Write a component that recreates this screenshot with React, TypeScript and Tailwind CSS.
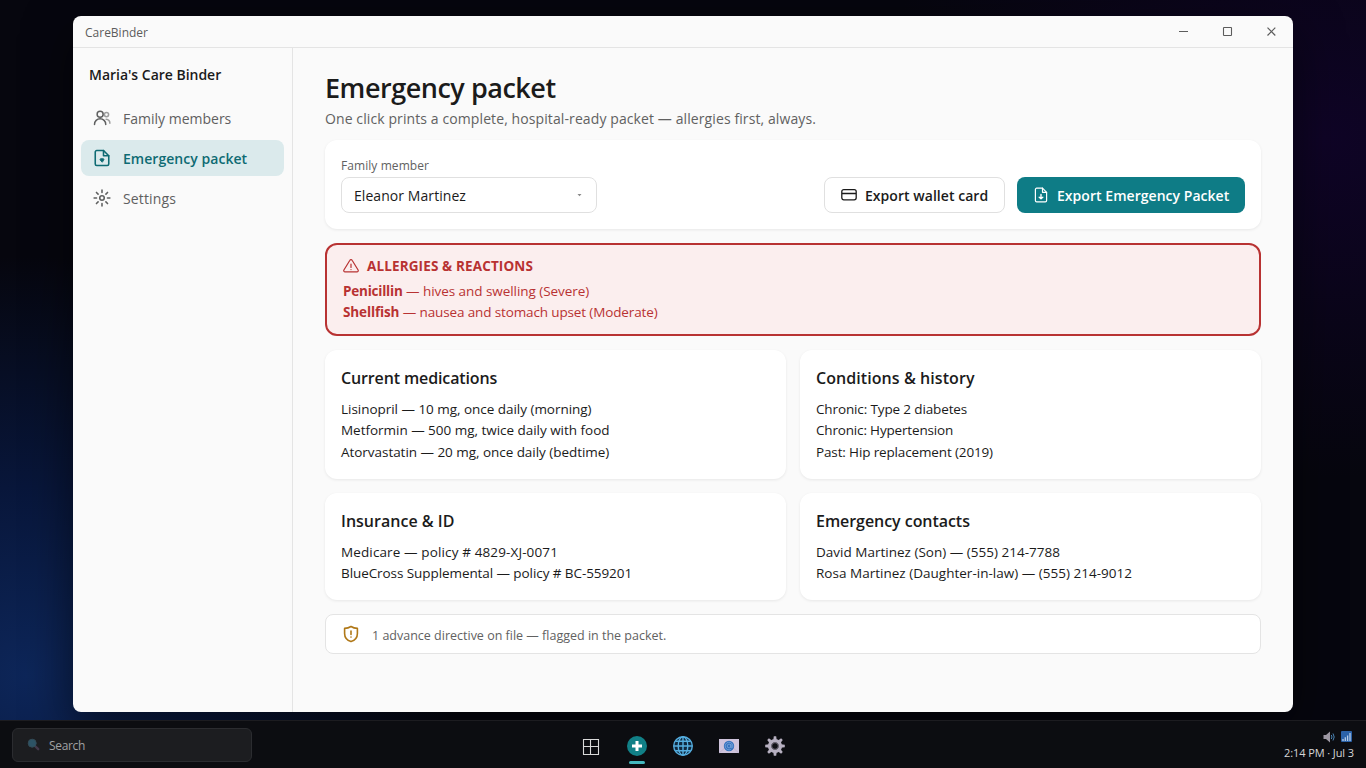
import type { ReactNode } from "react";

function UsersIcon() {
  return (
    <svg width="18" height="18" viewBox="0 0 24 24" fill="none" stroke="currentColor" strokeWidth="2" strokeLinecap="round">
      <circle cx="9.5" cy="7" r="4" />
      <path d="M2 20.500a7.500 7.500 0 0 1 15 0" />
      <g opacity=".6">
        <circle cx="18" cy="7.500" r="2.800" />
        <path d="M17.500 13.600c3 .3 5 2.400 5 5.400" />
      </g>
    </svg>
  );
}

function HeartFileIcon() {
  return (
    <svg width="18" height="18" viewBox="0 0 24 24" fill="none" stroke="currentColor" strokeWidth="2.100" strokeLinecap="round" strokeLinejoin="round">
      <path d="M14 2H5a2 2 0 0 0-2 2v16a2 2 0 0 0 2 2h14a2 2 0 0 0 2-2V9z" />
      <path d="M14 2v7h7" />
      <path d="M12 17.300l-2.300-2.400a1.350 1.350 0 0 1 2.300-1.600 1.350 1.350 0 0 1 2.300 1.600z" fill="currentColor" strokeWidth="1.200" />
    </svg>
  );
}

function SunGearIcon() {
  return (
    <svg width="18" height="18" viewBox="0 0 24 24" fill="none" stroke="currentColor" strokeWidth="2.100" strokeLinecap="round">
      <circle cx="12" cy="12" r="3" />
      <path d="M12 1.500v3.200M12 19.300v3.200M1.500 12h3.200M19.300 12h3.200M4.600 4.600l2.200 2.200M17.200 17.200l2.200 2.200M4.600 19.400l2.200-2.200M17.200 6.800l2.200-2.200" />
    </svg>
  );
}

function CardIcon() {
  return (
    <svg width="16" height="16" viewBox="0 0 16 16" fill="none" stroke="currentColor" strokeWidth="1.300" strokeLinejoin="round">
      <rect x="0.800" y="2.600" width="14.400" height="10.200" rx="2" />
      <path d="M1 6.500h14" />
    </svg>
  );
}

function FileDownIcon() {
  return (
    <svg width="16" height="16" viewBox="0 0 16 16" fill="none" stroke="currentColor" strokeWidth="1.200" strokeLinecap="round" strokeLinejoin="round">
      <path d="M9.500 1.200H3.700a1.300 1.300 0 0 0-1.300 1.300v11a1.300 1.300 0 0 0 1.300 1.300h8.600a1.300 1.300 0 0 0 1.300-1.300V5.300z" />
      <path d="M9.500 1.200v4.100h4.100" />
      <path d="M8 7.500v3.800M6.200 10.200l1.800 1.500 1.800-1.500" strokeWidth="1.400" />
    </svg>
  );
}

function WarningIcon() {
  return (
    <svg className="-mt-px" width="16" height="16" viewBox="0 0 16 16" fill="none" stroke="currentColor" strokeWidth="1.200" strokeLinecap="round" strokeLinejoin="round">
      <path d="M8 1.600c.5 0 .9.250 1.100.650l6 9.800c.450.800-.1 1.750-1.100 1.750H2c-1 0-1.550-.950-1.100-1.750l6-9.800c.2-.4.6-.650 1.100-.650z" />
      <path d="M8 6v3.500M8 11.500v.100" />
    </svg>
  );
}

function ShieldIcon() {
  return (
    <svg width="16" height="18" viewBox="0 0 16 18" fill="none" stroke="currentColor" strokeWidth="1.600" strokeLinecap="round" strokeLinejoin="round">
      <path d="M8 1.500c1.900 1.200 4 1.800 6.400 1.900v5c0 4.100-2.400 6.800-6.400 8.200-4-1.400-6.400-4.100-6.400-8.200v-5C4 3.300 6.100 2.700 8 1.500z" />
      <path d="M8 6v3.500M8 12v.100" />
    </svg>
  );
}

function NavItem({ icon, active, children }: { icon: ReactNode; active?: boolean; children: ReactNode }) {
  return (
    <div className={`flex h-9 items-center gap-3 rounded-lg pl-3 text-[14px] ${active ? "bg-[#dbeaec] font-[580] tracking-[0.040px] text-[#0e6b73]" : "text-[#5f6060]"}`}>
      {icon}
      <span>{children}</span>
    </div>
  );
}

function InfoCard({ title, titleClass, children }: { title: string; titleClass: string; children: ReactNode }) {
  return (
    <section className="rounded-xl bg-white px-4 pt-4 pb-4 shadow-[0_1px_3px_rgba(0,0,0,0.08)]">
      <h2 className={`mb-[8.600px] h-6 text-[16px] leading-6 font-[580] ${titleClass}`}>{title}</h2>
      <div className="text-[13.500px] leading-[21.450px]">{children}</div>
    </section>
  );
}

function Taskbar() {
  return (
    <footer className="grid h-12 grid-cols-[1fr_auto_1fr] items-center border-t border-[#1c1c20] bg-[#0c0d11] px-3">
      <div className="flex h-[34px] w-60 items-center rounded-md border border-[#2b2c30] bg-[#1c1d20] pl-[14px] text-[12px] tracking-[-0.330px] text-[#a0a1a3]">
        <svg width="13" height="13" viewBox="0 0 13 13">
          <path d="M8.500 8.500l2.700 2.700" stroke="#43384a" strokeWidth="2.400" strokeLinecap="round" />
          <circle cx="5.200" cy="5.200" r="4" fill="#2d5365" stroke="#334b57" strokeWidth="1" />
        </svg>
        <span className="ml-[9px] pt-[2px]">Search</span>
      </div>
      <div className="flex h-full items-center gap-[26px] pt-[2px]">
        <svg width="20" height="20" viewBox="0 0 20 20" fill="none" stroke="#dadada" strokeWidth="1.100">
          <path d="M2.500 3.500h15v15h-15zM9.500 3.500v15M2.500 10.500h15" />
        </svg>
        <div className="relative">
          <svg width="20" height="20" viewBox="0 0 20 20">
            <circle cx="10" cy="10" r="10" fill="#118087" />
            <path d="M10 5v10M5 10h10" stroke="white" strokeWidth="3" />
          </svg>
          <span className="absolute top-[25px] left-[2px] h-[3px] w-4 rounded-full bg-[#45b8bf]" />
        </div>
        <svg width="20" height="20" viewBox="0 0 20 20" fill="none" stroke="#55aee0" strokeWidth="1.400">
          <circle cx="10" cy="10" r="9.300" fill="#10293f" />
          <ellipse cx="10" cy="10" rx="4.800" ry="9.200" />
          <path d="M10 1v18M1 10h18M2.500 5.300h15M2.500 14.700h15" />
        </svg>
        <svg width="20" height="20" viewBox="0 0 20 20">
          <rect y="3" width="20" height="14" fill="#cfc4dc" />
          <path d="M0 17l7-6M20 17l-7-6" stroke="#c0b4d0" />
          <circle cx="10" cy="10" r="5.200" fill="#3471bd" />
          <path d="M12 8v3c0 1.300 1.800 1 1.800-.800A3.800 3.800 0 1 0 11.800 13.400M12 10a1.900 1.900 0 1 1-3.800 0 1.900 1.900 0 0 1 3.800 0" fill="none" stroke="#86b0e0" strokeWidth=".7" />
        </svg>
        <svg width="20" height="20" viewBox="0 0 20 20" fill="#b7b0c1">
          <g>
            <path id="tooth" d="M8.300 4L8.800.200h2.400l.5 3.800zM8.300 16l.5 3.800h2.400l.5-3.800z" />
            <use href="#tooth" transform="rotate(45 10 10)" />
            <use href="#tooth" transform="rotate(90 10 10)" />
            <use href="#tooth" transform="rotate(135 10 10)" />
          </g>
          <circle cx="10" cy="10" r="5.300" fill="none" stroke="#b7b0c1" strokeWidth="3.600" />
          <circle cx="10" cy="10" r="3.400" stroke="#77717f" strokeWidth="1" fill="#111116" />
        </svg>
      </div>
      <div className="flex flex-col items-end text-[11px] leading-4 text-[#d6d6d8]">
        <div className="flex items-center gap-[6px] pt-[2px] pr-[2px]">
          <svg width="12" height="12" viewBox="0 0 12 12">
            <path d="M.5 4H3l4-3.500v11L3 8H.500z" fill="#9d98a3" />
            <path d="M8.300 4q1.400 2 0 4M10 2.500q2.400 3.500 0 7" fill="none" stroke="#4c85b5" />
          </svg>
          <svg width="11" height="11" viewBox="0 0 11 11">
            <rect width="11" height="11" rx="1" fill="#2b62a8" />
            <path d="M2 10V8M4.300 10V6.300M6.600 10V4.500M9 10V2" stroke="#b5cbe6" strokeWidth="1.300" />
          </svg>
        </div>
        <div className="pt-[2px] tracking-[-0.090px]">2:14 PM · Jul 3</div>
      </div>
    </footer>
  );
}

export default function App() {
  return (
    <div className="flex h-screen flex-col overflow-hidden bg-[#06060e] bg-[radial-gradient(ellipse_430px_420px_at_2%_88%,#0d2659_0%,#08163a_45%,transparent_100%),radial-gradient(ellipse_460px_340px_at_97%_18%,#0f0426_0%,transparent_100%)] font-['Open_Sans','Noto_Sans',sans-serif] text-[#1b1b1b]">
      <div className="flex min-h-0 flex-1 px-[73px] pt-4 pb-2">
        <div className="flex min-w-0 flex-1 flex-col overflow-hidden rounded-lg bg-[#fafafa] shadow-[0_16px_48px_rgba(0,0,0,0.5)]">
          <header className="flex h-8 shrink-0 items-center justify-between border-b border-[#e4e4e4] pl-3 text-[#5c5c5c]">
            <span className="pt-[2px] text-[12px]">CareBinder</span>
            <div className="flex">
              <svg width="44" height="31" viewBox="0 0 44 31" fill="none" stroke="currentColor" strokeWidth="1.100"><path d="M18 15.500h9" /></svg>
              <svg width="44" height="31" viewBox="0 0 44 31" fill="none" stroke="currentColor" strokeWidth="1.100"><rect x="18.500" y="11.500" width="8" height="8" rx=".6" /></svg>
              <svg width="44" height="31" viewBox="0 0 44 31" fill="none" stroke="currentColor" strokeWidth="1.200"><path d="M18.500 11.700l7.800 7.800M26.300 11.700l-7.800 7.800" /></svg>
            </div>
          </header>
          <div className="flex min-h-0 flex-1">
            <aside className="flex w-[220px] shrink-0 flex-col gap-1 border-r border-[#e4e4e4] px-2 pt-4">
              <div className="mb-[11px] h-[21px] px-2 text-[14px] leading-[21px] font-[570] tracking-[-0.020px]">Maria's Care Binder</div>
              <NavItem icon={<UsersIcon />}>Family members</NavItem>
              <NavItem icon={<HeartFileIcon />} active>Emergency packet</NavItem>
              <NavItem icon={<SunGearIcon />}><span className="tracking-[0.136px]">Settings</span></NavItem>
            </aside>
            <main className="flex min-w-0 flex-1 flex-col px-8 pt-6">
              <h1 className="h-9 text-[27px] leading-[32px] font-[580] tracking-[-0.470px]">Emergency packet</h1>
              <p className="h-[22px] text-[14px] leading-[21px] tracking-[0.099px] text-[#616161]">One click prints a complete, hospital-ready packet — allergies first, always.</p>
              <div className="mt-[10px] flex flex-col gap-[14px]">
                <section className="flex h-[89px] items-end rounded-xl bg-white px-4 pb-4 shadow-[0_1px_3px_rgba(0,0,0,0.08)]">
                  <div className="w-64">
                    <div className="mb-[3px] text-[12px] leading-4 tracking-[0.069px] text-[#616161]">Family member</div>
                    <div className="flex h-9 items-center justify-between rounded-lg border border-[#e0e0e0] bg-white pr-[14px] pl-3 text-[14px]">
                      <span className="tracking-[0.066px]">Eleanor Martinez</span>
                      <svg width="5" height="3" viewBox="0 0 5 3"><path d="M.5 0h4L2.500 2.200z" fill="#888" /></svg>
                    </div>
                  </div>
                  <div className="ml-auto flex gap-3 text-[14px] font-[580] tracking-[0.040px]">
                    <button className="flex h-9 w-[181px] items-center gap-2 rounded-lg border border-[#e0e0e0] bg-white pl-4"><CardIcon /><span>Export wallet card</span></button>
                    <button className="flex h-9 w-[228px] items-center gap-2 rounded-lg bg-[#0e7c86] pl-4 text-white"><FileDownIcon /><span>Export Emergency Packet</span></button>
                  </div>
                </section>
                <section className="h-[93px] rounded-xl border-2 border-[#b83232] bg-[#fbeeee] px-4 pt-[11px] text-[#b83232]">
                  <h2 className="mb-[5px] flex h-5 items-center gap-2 text-[13.500px] font-bold"><WarningIcon /><span className="pt-px tracking-[0.130px]">ALLERGIES &amp; REACTIONS</span></h2>
                  <div className="text-[13.500px] leading-[21.450px]">
                    <div className="tracking-[-0.050px]"><b className="tracking-[-0.220px]">Penicillin</b> — hives and swelling (Severe)</div>
                    <div className="tracking-[-0.130px]"><b className="tracking-[-0.120px]">Shellfish</b> — nausea and stomach upset (Moderate)</div>
                  </div>
                </section>
                <div className="grid grid-cols-2 gap-[14px]">
                  <InfoCard title="Current medications" titleClass="tracking-[-0.130px]">
                    <div className="tracking-[-0.030px]">Lisinopril — 10 mg, once daily (morning)</div>
                    <div className="tracking-[-0.025px]">Metformin — 500 mg, twice daily with food</div>
                    <div className="tracking-[-0.040px]">Atorvastatin — 20 mg, once daily (bedtime)</div>
                  </InfoCard>
                  <InfoCard title="Conditions & history" titleClass="tracking-[0.070px]">
                    <div className="tracking-[-0.130px]">Chronic: Type 2 diabetes</div>
                    <div className="tracking-[-0.170px]">Chronic: Hypertension</div>
                    <div className="tracking-[-0.140px]">Past: Hip replacement (2019)</div>
                  </InfoCard>
                  <InfoCard title="Insurance & ID" titleClass="tracking-[0.010px]">
                    <div className="tracking-[0.125px]">Medicare — policy # 4829-XJ-0071</div>
                    <div className="tracking-[-0.077px]">BlueCross Supplemental — policy # BC-559201</div>
                  </InfoCard>
                  <InfoCard title="Emergency contacts" titleClass="tracking-[-0.050px]">
                    <div className="tracking-[0.010px]">David Martinez (Son) — (555) 214-7788</div>
                    <div className="tracking-[0.015px]">Rosa Martinez (Daughter-in-law) — (555) 214-9012</div>
                  </InfoCard>
                </div>
                <div className="flex h-10 items-center gap-[13px] rounded-lg border border-[#e4e4e4] bg-white px-[17px] text-[12.500px] text-[#616161]">
                  <span className="text-[#b07818]"><ShieldIcon /></span>
                  <span className="pt-[3px]">1 advance directive on file — flagged in the packet.</span>
                </div>
              </div>
            </main>
          </div>
        </div>
      </div>
      <Taskbar />
    </div>
  );
}
